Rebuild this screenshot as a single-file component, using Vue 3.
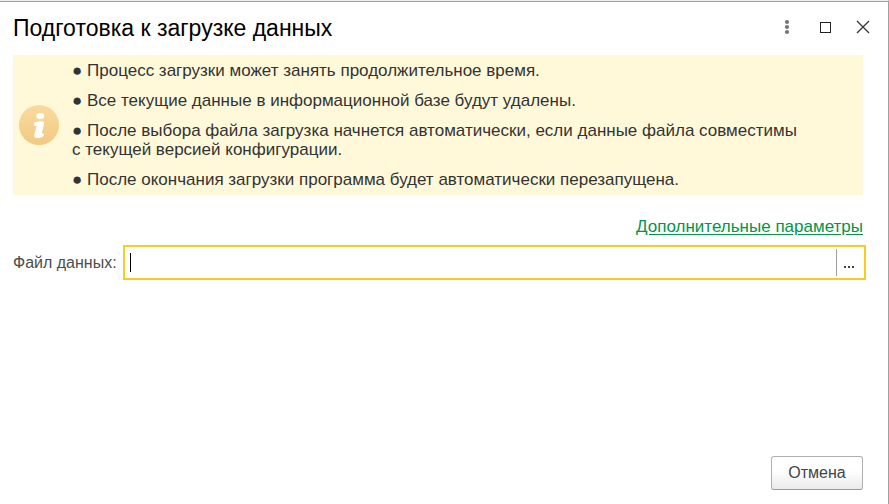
<script setup>
import { ref } from 'vue'

const notes = [
  ['Процесс загрузки может занять продолжительное время.'],
  ['Все текущие данные в информационной базе будут удалены.'],
  [
    'После выбора файла загрузка начнется автоматически, если данные файла совместимы',
    'с текущей версией конфигурации.',
  ],
  ['После окончания загрузки программа будет автоматически перезапущена.'],
]
const file = ref('')
</script>

<template>
  <main class="dialog">
    <header class="titlebar">
      <h1>Подготовка к загрузке данных</h1>
      <div class="tools">
        <button type="button" aria-label="Меню">
          <svg width="20" height="20" viewBox="0 0 20 20" fill="#757575">
            <circle cx="10" cy="5" r="2.1" />
            <circle cx="10" cy="10" r="2.1" />
            <circle cx="10" cy="15" r="2.1" />
          </svg>
        </button>
        <button type="button" aria-label="Развернуть">
          <svg width="20" height="20" viewBox="0 0 20 20" fill="none" stroke="#222">
            <rect x="5.5" y="5.5" width="10" height="10" />
          </svg>
        </button>
        <button type="button" aria-label="Закрыть">
          <svg width="20" height="20" viewBox="0 0 20 20" fill="none" stroke="#333" stroke-width="1.3">
            <path d="M4 4 16 16M16 4 4 16" />
          </svg>
        </button>
      </div>
    </header>

    <section class="info">
      <svg class="badge" width="40" height="40" viewBox="0 0 40 40">
        <defs>
          <linearGradient id="badge-fill" x1="0" y1="0" x2="0" y2="1">
            <stop offset="0" stop-color="#fadb9d" />
            <stop offset="1" stop-color="#f1c983" />
          </linearGradient>
        </defs>
        <circle cx="20" cy="20" r="20" fill="url(#badge-fill)" />
        <g fill="#fff">
          <ellipse cx="21.3" cy="11" rx="4" ry="3.1" />
          <path
            d="M16.4 17C19 16.6 21 16.2 23 16.2Q25.4 16.4 25 18.6L22.8 28.6
               Q25.2 28.2 25 30C24.6 32 21.5 33 18.6 33Q15 33 15.2 30.4
               L17.4 20.9Q14.8 21.2 14.8 19Q14.8 17.3 16.4 17Z"
          />
        </g>
      </svg>
      <div class="notes">
        <p v-for="(lines, i) in notes" :key="i">
          ● <template v-for="(line, j) in lines" :key="j"><br v-if="j">{{ line }}</template>
        </p>
      </div>
    </section>

    <a class="more" href="#">Дополнительные параметры</a>

    <div class="row">
      <label for="data-file">Файл данных:</label>
      <div class="field">
        <span class="caret"></span>
        <input id="data-file" v-model="file" type="text">
        <button type="button" class="pick" aria-label="Выбрать файл">
          <svg width="12" height="4" viewBox="0 0 12 4" fill="#444">
            <path d="M1 1h2v2H1zM5 1h2v2H5zM9 1h2v2H9z" />
          </svg>
        </button>
      </div>
    </div>

    <footer class="actions">
      <button type="button" class="cancel">Отмена</button>
    </footer>
  </main>
</template>

<style>
body {
  background: #fff;
}
</style>

<style scoped>
.dialog {
  box-sizing: border-box;
  display: flex;
  flex-direction: column;
  min-height: 100vh;
  padding: 10px 25px 14px 13px;
  border-top: 1px solid #ededed;
  border-right: 1px solid #a0a0a0;
  box-shadow: inset 0 1px #a0a0a0;
  font: 16px/19px "Liberation Sans", Arial, sans-serif;
  color: #333;
}
button {
  font: inherit;
  color: inherit;
  cursor: pointer;
}
.titlebar {
  display: flex;
  justify-content: space-between;
  align-items: flex-start;
  height: 32px;
}
h1 {
  margin: 0;
  font-size: 23px;
  line-height: 34px;
  font-weight: 400;
  color: #000;
}
.tools {
  display: flex;
  gap: 18px;
  padding-top: 6px;
  margin-right: -10px;
}
.tools button {
  display: flex;
  padding: 0;
  border: 0;
  background: none;
}
.info {
  display: flex;
  align-items: center;
  gap: 13px;
  margin-top: 12px;
  padding: 6px;
  background: #fff9da;
}
.badge {
  flex: none;
}
.notes {
  display: flex;
  flex-direction: column;
  gap: 11px;
  font-size: 17px;
}
.notes p {
  margin: 0;
}
.more {
  align-self: flex-end;
  margin-top: 22px;
  font-size: 17px;
  color: #009646;
  text-decoration: underline;
  text-underline-offset: 2px;
}
.row {
  display: flex;
  align-items: center;
  gap: 6px;
  margin: 9px -3px 0 0;
}
label {
  color: #4d4d4d;
}
.field {
  flex: 1;
  display: flex;
  align-items: center;
  box-sizing: border-box;
  height: 35px;
  padding: 2px 0 2px 5px;
  border: 2px solid #fbcb1d;
  background: #fff;
}
.caret {
  width: 1px;
  height: 19px;
  background: #000;
}
input {
  flex: 1;
  min-width: 0;
  padding: 0;
  border: 0;
  outline: 0;
  background: none;
  font: inherit;
  color: inherit;
}
.pick {
  display: flex;
  align-items: center;
  justify-content: center;
  align-self: stretch;
  width: 28px;
  padding: 8px 3px 0 0;
  border: 0;
  border-left: 1px solid #a0a0a0;
  background: none;
}
.actions {
  display: flex;
  justify-content: flex-end;
  margin-top: auto;
}
.cancel {
  min-width: 92px;
  height: 34px;
  padding: 0 16px 2px;
  border: 1px solid #b0b0b0;
  border-bottom-color: #999;
  border-radius: 3px;
  background: linear-gradient(#fff 40%, #ebebeb);
  color: #444;
}
</style>
